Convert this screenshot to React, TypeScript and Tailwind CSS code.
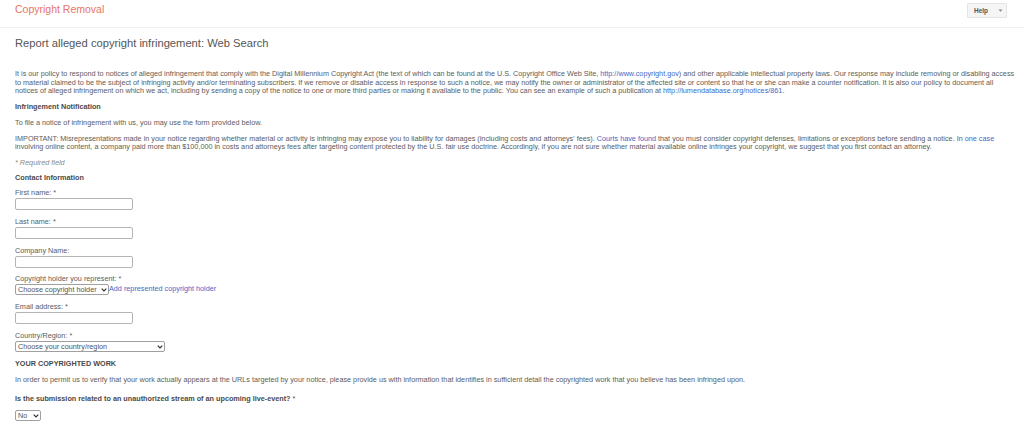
import React from "react";

const Link = ({ children }: { children: React.ReactNode }) => (
	<a className="text-[#4668c5]">{children}</a>
);

const TextField = ({ label }: { label: string }) => (
	<div className="mb-[6px]">
		<div className="h-[11px] leading-[11px]">{label}</div>
		<input className="block w-[118px] h-[12px] bg-white border border-[#b4b4b4] rounded-[2px]" />
	</div>
);

const Select = ({ label, width }: { label: string; width: string }) => (
	<div className={`relative h-[11px] shrink-0 ${width}`}>
		<select className="block w-full h-full appearance-none bg-white border border-[#a0a0a0] rounded-[2px] pl-[2px] text-[7.25px] leading-[9px] text-[#555] font-['Liberation_Sans',Arial,sans-serif]">
			<option>{label}</option>
		</select>
		<svg
			className="absolute right-[2px] top-[4px]"
			width="6"
			height="4"
			viewBox="0 0 6 4"
		>
			<path d="M0.7 0.7L3 3L5.3 0.7" fill="none" stroke="#333" strokeWidth="1.2" />
		</svg>
	</div>
);

export default function App() {
	return (
		<div className="w-[1024px] h-[431px] overflow-hidden bg-white font-['Liberation_Sans',Arial,sans-serif] text-[7.25px] text-[#5c5c5c]">
			{/* Header */}
			<div className="h-[28px] border-b border-[#f0f0f0] flex items-center justify-between pl-[15px] pr-[17px]">
				<div className="text-[10.5px] text-[#e8736a] mt-[-7px]">Copyright Removal</div>
				<div className="w-[40px] h-[15px] mt-[-6px] bg-[#f5f5f5] border border-[#e4e4e4] rounded-[1px] flex items-center justify-between pl-[6px] pr-[3px] text-[6.5px] font-bold text-[#555]">
					<span>Help</span>
					<svg width="5" height="3" viewBox="0 0 5 3">
						<path d="M0.5 0.5h4L2.5 2.8z" fill="#888" />
					</svg>
				</div>
			</div>

			<div className="pl-[15px] pr-[8px]">
				<h1 className="text-[11.2px] leading-[16px] mt-[7px] text-[#555]">
					Report alleged copyright infringement: Web Search
				</h1>

				<p className="mt-[19px] leading-[8.5px]">
					It is our policy to respond to notices of alleged infringement that comply with the Digital Millennium Copyright Act (the text of which can be found at the U.S. Copyright Office Web Site, <Link>http://www.copyright.gov</Link>) and other applicable intellectual property laws. Our response may include removing or disabling access to material claimed to be the subject of infringing activity and/or terminating subscribers. If we remove or disable access in response to such a notice, we may notify the owner or administrator of the affected site or content so that he or she can make a counter notification. It is also our policy to document all notices of alleged infringement on which we act, including by sending a copy of the notice to one or more third parties or making it available to the public. You can see an example of such a publication at <Link>http://lumendatabase.org/notices/861</Link>.
				</p>

				<p className="mt-[6px] leading-[9px] font-bold text-[#4a4a4a]">Infringement Notification</p>
				<p className="mt-[7px] leading-[9px]">To file a notice of infringement with us, you may use the form provided below.</p>

				<p className="mt-[8px] leading-[8.5px]">
					IMPORTANT: Misrepresentations made in your notice regarding whether material or activity is infringing may expose you to liability for damages (including costs and attorneys' fees). <Link>Courts have found</Link> that you must consider copyright defenses, limitations or exceptions before sending a notice. In <Link>one case</Link> involving online content, a company paid more than $100,000 in costs and attorneys fees after targeting content protected by the U.S. fair use doctrine. Accordingly, if you are not sure whether material available online infringes your copyright, we suggest that you first contact an attorney.
				</p>

				<p className="mt-[6px] leading-[9px] italic text-[#8a8a8a]">* Required field</p>
				<p className="mt-[6px] leading-[9px] font-bold text-[#4a4a4a] mb-[5px]">Contact Information</p>

				<TextField label="First name: *" />
				<TextField label="Last name: *" />
				<div className="mb-[5px]">
					<div className="h-[11px] leading-[11px]">Company Name:</div>
					<input className="block w-[118px] h-[12px] bg-white border border-[#b4b4b4] rounded-[2px]" />
				</div>

				<div className="mb-[6px]">
					<div className="h-[11px] leading-[11px]">Copyright holder you represent: *</div>
					<div className="flex items-center">
						<Select label="Choose copyright holder" width="w-[94px]" />
						<Link>Add represented copyright holder</Link>
					</div>
				</div>

				<TextField label="Email address: *" />

				<div>
					<div className="h-[11px] leading-[11px]">Country/Region: *</div>
					<Select label="Choose your country/region" width="w-[150px]" />
				</div>

				<p className="mt-[7px] leading-[9px] font-bold text-[#4a4a4a]">YOUR COPYRIGHTED WORK</p>
				<p className="mt-[7px] leading-[9px]">
					In order to permit us to verify that your work actually appears at the URLs targeted by your notice, please provide us with information that identifies in sufficient detail the copyrighted work that you believe has been infringed upon.
				</p>
				<p className="mt-[10px] leading-[9px] font-bold text-[#4a4a4a]">
					Is the submission related to an unauthorized stream of an upcoming live-event? <span className="font-normal">*</span>
				</p>
				<div className="mt-[7px]">
					<Select label="No" width="w-[26px]" />
				</div>
			</div>
		</div>
	);
}
